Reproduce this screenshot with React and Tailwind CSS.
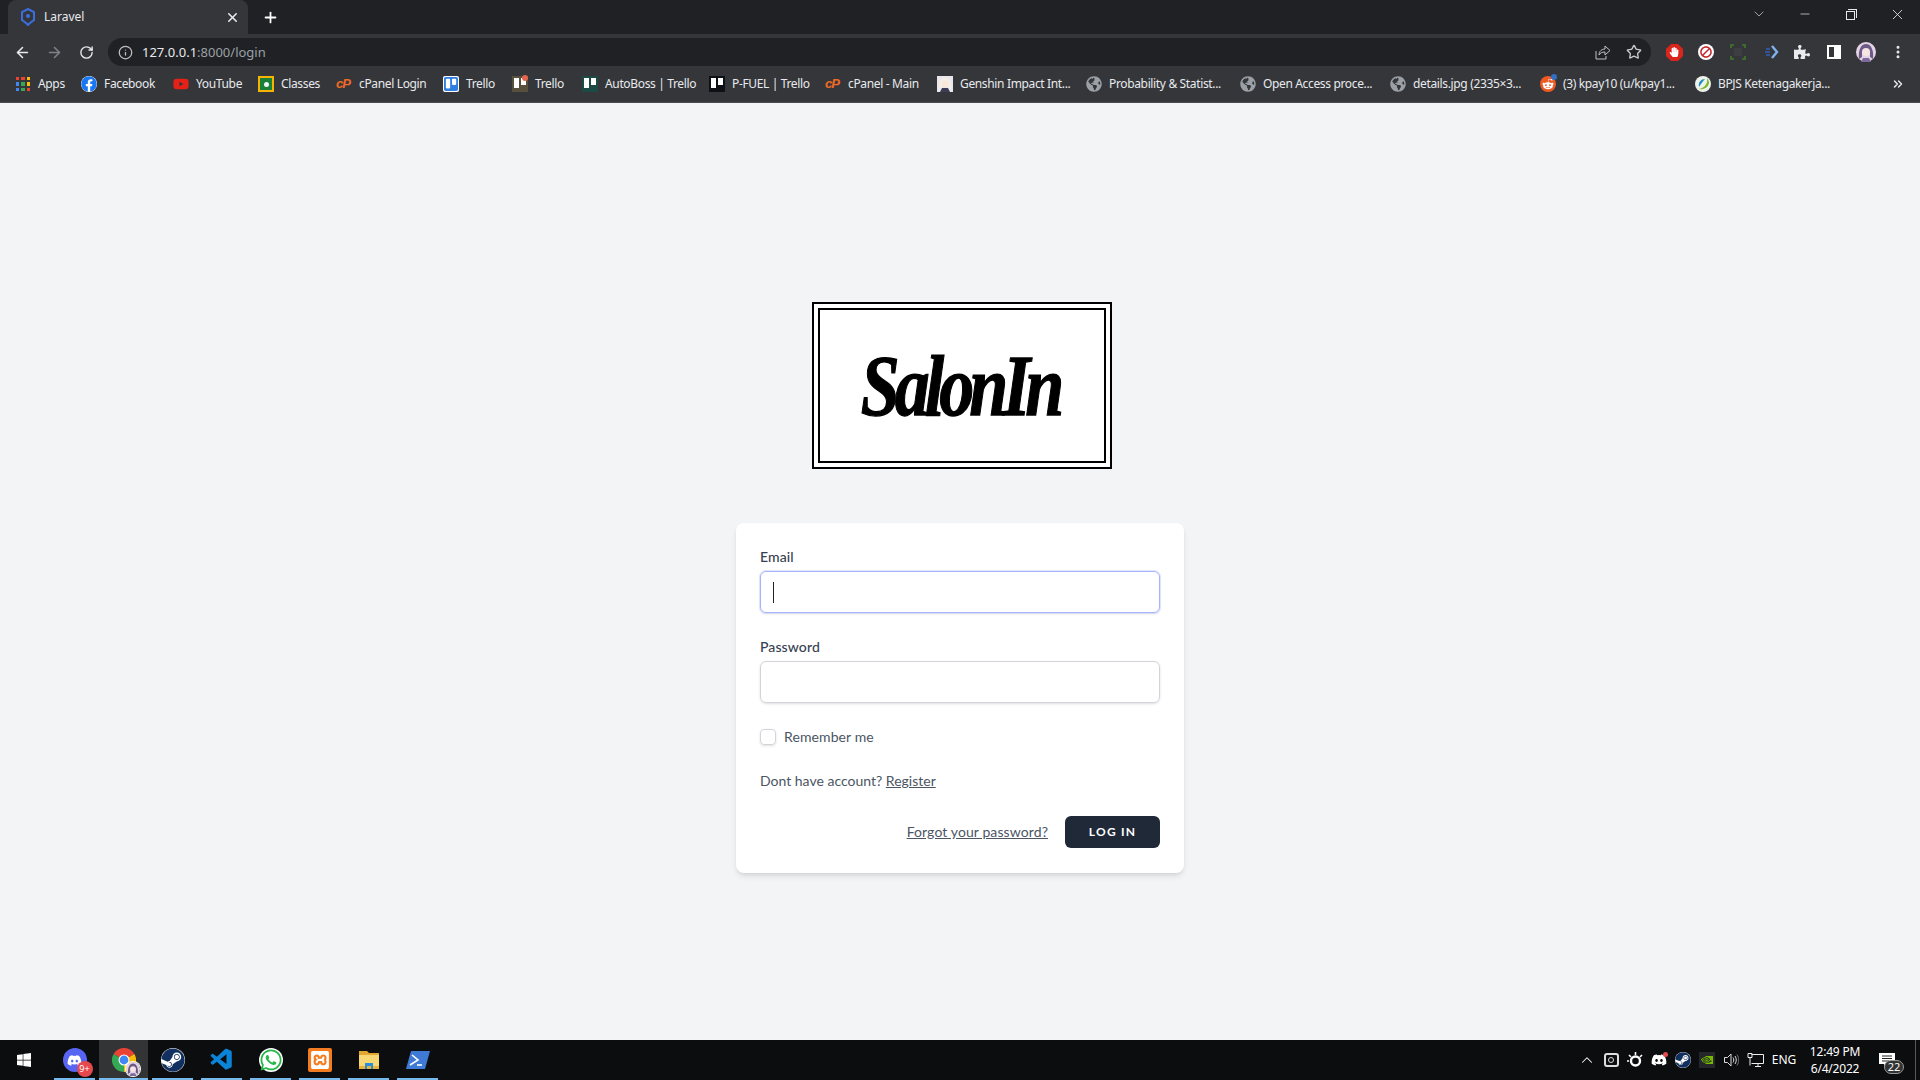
import React from 'react';
import { ArrowLeft, ArrowRight, RotateCw, Info, Star, Plus, X, Minus, ChevronDown, ChevronUp, EllipsisVertical, ChevronsRight } from 'lucide-react';
import { FaFacebook, FaYoutube, FaTrello, FaWindows, FaDiscord, FaSteam, FaWhatsapp, FaRedditAlien, FaGlobeAmericas, FaPuzzlePiece, FaHandPaper, FaBan } from 'react-icons/fa';
import { SiXampp, SiNvidia } from 'react-icons/si';
import { VscVscode } from 'react-icons/vsc';

const AppsIcon = () => (
  <div className="grid grid-cols-3 gap-[2px] w-[14px] h-[14px]">
    <span className="bg-[#ea4335]" /><span className="bg-[#ea4335]" /><span className="bg-[#fbbc05]" />
    <span className="bg-[#4285f4]" /><span className="bg-[#34a853]" /><span className="bg-[#fbbc05]" />
    <span className="bg-[#4285f4]" /><span className="bg-[#34a853]" /><span className="bg-[#ea4335]" />
  </div>
);

const Avatar = ({ size = 20 }) => (
  <svg width={size} height={size} viewBox="0 0 20 20">
    <circle cx="10" cy="10" r="10" fill="#e4d5e6" />
    <path d="M3 17C2 8 5 2 10 2s8 6 7 15l-3-2V9H6v6z" fill="#6d5a86" />
    <circle cx="10" cy="10" r="4" fill="#f6e5e2" />
    <path d="M5 20l2-4h6l2 4z" fill="#7b6a9b" />
  </svg>
);

const ClassesIcon = () => (
  <div className="w-4 h-4 bg-[#f4b400] p-[2px] flex items-center justify-center">
    <div className="w-full h-full bg-[#188038] flex items-center justify-center">
      <span className="w-[5px] h-[5px] rounded-full bg-[#f1f3f4]" />
    </div>
  </div>
);

const CpanelIcon = () => (
  <span className="w-4 text-[#f06a26] text-[13px] leading-4 font-bold italic tracking-[-1px] font-['Liberation_Sans',sans-serif]">cP</span>
);

const TrelloIcon = () => <FaTrello className="text-[#2f7fe0] bg-white rounded-[2px]" size={16} />;

const BoardThumb = ({ bg, dot }) => (
  <div className={`relative w-4 h-4 flex justify-center gap-[2px] pt-[2px] ${bg}`}>
    <span className="w-[5px] h-[10px] bg-white" />
    <span className="w-[5px] h-[7px] bg-white" />
    {dot && <span className="absolute -top-[1px] right-0 w-[6px] h-[6px] rounded-full bg-[#e5654f]" />}
  </div>
);

const GenshinIcon = () => (
  <svg width="16" height="16" viewBox="0 0 16 16">
    <rect width="16" height="16" fill="#e9e6ee" />
    <path d="M2 14C1 6 4 1 8 1s7 5 6 13l-3-2V6H5v6z" fill="#f4efe6" />
    <circle cx="8" cy="8" r="3.4" fill="#fbe6da" />
    <path d="M3 16l2-4h6l2 4z" fill="#3d3b58" />
  </svg>
);

const Globe = () => <FaGlobeAmericas className="text-[#9aa0a6]" size={16} />;

const RedditIcon = () => (
  <div className="relative w-4 h-4 rounded-full bg-[#ee5a22] flex items-center justify-center">
    <FaRedditAlien className="text-white" size={12} />
    <span className="absolute -top-[2px] -right-[1px] w-[6px] h-[6px] rounded-full bg-[#2f6fc4]" />
  </div>
);

const BpjsIcon = () => (
  <svg width="16" height="16" viewBox="0 0 16 16">
    <circle cx="8" cy="8" r="8" fill="#eef2ea" />
    <path d="M12 2c1 5-2 10-8 11 4 1 9-1 10-6 0-2-1-4-2-5z" fill="#7ab929" />
    <path d="M10 3C6 3 3 6 4 11c2-3 4-6 6-8z" fill="#1f8fc4" />
  </svg>
);

const bookmarks = [
  { icon: <AppsIcon />, label: 'Apps', width: 'w-[66px]' },
  { icon: <FaFacebook className="text-[#1877f2] bg-white rounded-full" size={16} />, label: 'Facebook', width: 'w-[92px]' },
  { icon: <FaYoutube className="text-[#e62117]" size={16} />, label: 'YouTube', width: 'w-[85px]' },
  { icon: <ClassesIcon />, label: 'Classes', width: 'w-[78px]' },
  { icon: <CpanelIcon />, label: 'cPanel Login', width: 'w-[107px]' },
  { icon: <TrelloIcon />, label: 'Trello', width: 'w-[69px]' },
  { icon: <BoardThumb bg="bg-[#57503c]" dot />, label: 'Trello', width: 'w-[70px]' },
  { icon: <BoardThumb bg="bg-[#1d4a44]" />, label: 'AutoBoss | Trello', width: 'w-[127px]' },
  { icon: <BoardThumb bg="bg-[#0d1014]" />, label: 'P-FUEL | Trello', width: 'w-[116px]' },
  { icon: <CpanelIcon />, label: 'cPanel - Main', width: 'w-[112px]' },
  { icon: <GenshinIcon />, label: 'Genshin Impact Int...', width: 'w-[149px]' },
  { icon: <Globe />, label: 'Probability & Statist...', width: 'w-[154px]' },
  { icon: <Globe />, label: 'Open Access proce...', width: 'w-[150px]' },
  { icon: <Globe />, label: 'details.jpg (2335×3...', width: 'w-[150px]' },
  { icon: <RedditIcon />, label: '(3) kpay10 (u/kpay1...', width: 'w-[155px]' },
  { icon: <BpjsIcon />, label: 'BPJS Ketenagakerja...', width: 'w-[140px]' },
];

const ChromeIcon = () => (
  <div className="relative w-6 h-6">
    <svg width="24" height="24" viewBox="0 0 24 24">
      <path d="M12 12 L1.6 6 A12 12 0 0 1 22.4 6 Z" fill="#ea4335" />
      <path d="M12 12 L22.4 6 A12 12 0 0 1 12 24 Z" fill="#fbbc05" />
      <path d="M12 12 L12 24 A12 12 0 0 1 1.6 6 Z" fill="#34a853" />
      <circle cx="12" cy="12" r="5.5" fill="#fff" />
      <circle cx="12" cy="12" r="4.4" fill="#4285f4" />
    </svg>
    <div className="absolute -right-[4px] -bottom-[4px] rounded-full ring-1 ring-white">
      <Avatar size={14} />
    </div>
  </div>
);

const FolderIcon = () => (
  <svg width="24" height="24" viewBox="0 0 24 24">
    <path d="M2 3h8l2 2h10v5H2z" fill="#e2a72e" />
    <path d="M2 7h20v14H2z" fill="#f8d775" />
    <path d="M2 18h20v3H2z" fill="#e8b23c" />
    <path d="M8 15h8v6h-2v-3h-4v3H8z" fill="#2b8fd8" />
  </svg>
);

const PowershellIcon = () => (
  <svg width="24" height="24" viewBox="0 0 24 24">
    <path d="M5 3h19l-5 18H0z" fill="#3f7bd6" />
    <path d="M6 7l6 5-8 5" fill="none" stroke="#fff" strokeWidth="1.6" />
    <path d="M11 17h5" stroke="#fff" strokeWidth="1.6" />
  </svg>
);

const XamppIcon = () => (
  <div className="w-6 h-6 rounded-[2px] bg-[#f47b20] flex items-center justify-center">
    <SiXampp className="text-white" size={18} />
  </div>
);

const SteamIcon = ({ size = 24 }) => (
  <div className="rounded-full bg-white">
    <FaSteam className="text-[#12305f]" size={size} />
  </div>
);

const taskbarApps = [
  {
    icon: (
      <div className="relative w-6 h-6 rounded-full bg-[#5865f2] flex items-center justify-center">
        <FaDiscord className="text-white" size={15} />
        <span className="absolute -right-[6px] -bottom-[5px] w-[16px] h-[16px] rounded-full bg-[#e5484d] text-white text-[9px] leading-[16px] text-center">9+</span>
      </div>
    ),
    key: 'discord',
  },
  { icon: <ChromeIcon />, key: 'chrome', active: true },
  { icon: <SteamIcon />, key: 'steam' },
  { icon: <VscVscode className="text-[#0a84d6]" size={26} />, key: 'code' },
  {
    icon: (
      <div className="w-6 h-6 rounded-full bg-white flex items-center justify-center">
        <FaWhatsapp className="text-[#25b848]" size={24} />
      </div>
    ),
    key: 'whatsapp',
  },
  { icon: <XamppIcon />, key: 'xampp' },
  { icon: <FolderIcon />, key: 'folder' },
  { icon: <PowershellIcon />, key: 'powershell' },
];

const BrowserChrome = () => (
  <div className="shrink-0">
    {/* tab strip */}
    <div className="h-[34px] bg-[#202124] flex items-end pl-2 text-white">
      <div className="w-[240px] h-[34px] mt-0 bg-[#35363a] rounded-t-lg flex items-center pl-[12px] pr-[8px]">
        <svg width="16" height="18" viewBox="0 0 16 18">
          <path d="M8 1l6 3v8l-4 3-2 2-2-2-4-3V4z" fill="none" stroke="#3b6fe0" strokeWidth="2" />
          <circle cx="8" cy="8" r="2" fill="#3b6fe0" />
        </svg>
        <span className="ml-2 flex-1 text-[12px] text-[#e8eaed]">Laravel</span>
        <X size={15} strokeWidth={2.5} className="text-[#e8eaed]" />
      </div>
      <div className="w-[44px] h-[34px] flex items-center justify-center">
        <Plus size={17} strokeWidth={2.5} />
      </div>
      <div className="flex-1" />
      <div className="h-[34px] flex items-start text-[#e8eaed]">
        <div className="w-[46px] h-7 flex items-center justify-center"><ChevronDown size={16} strokeWidth={1.2} className="text-[#bdc1c6]" /></div>
        <div className="w-[46px] h-7 flex items-center justify-center"><Minus size={14} strokeWidth={1.2} /></div>
        <div className="w-[46px] h-7 flex items-center justify-center pr-[2px]">
          <div className="relative w-[9px] h-[9px] border border-[#e8eaed] mt-[2px] before:absolute before:-top-[3px] before:-right-[3px] before:w-[9px] before:h-[9px] before:border-t before:border-r before:border-[#e8eaed]" />
        </div>
        <div className="w-[46px] h-7 flex items-center justify-center"><X size={17} strokeWidth={1.2} /></div>
      </div>
    </div>

    {/* toolbar */}
    <div className="h-[32px] bg-[#35363a] flex items-start pt-1 pl-[6px]">
      <div className="w-8 h-7 flex items-center justify-center text-[#e8eaed]"><ArrowLeft size={17} strokeWidth={2.2} /></div>
      <div className="w-8 h-7 flex items-center justify-center text-[#7e8185]"><ArrowRight size={17} strokeWidth={2.2} /></div>
      <div className="w-8 h-7 flex items-center justify-center text-[#e8eaed]"><RotateCw size={15} strokeWidth={2.2} /></div>
      <div className="ml-[6px] w-[1543px] h-7 rounded-full bg-[#202124] flex items-center pl-[10px] pr-[8px]">
        <Info size={15} className="text-[#bdc1c6]" />
        <span className="ml-[9px] text-[13px] leading-7 text-[#e8eaed]">127.0.0.1<span className="text-[#9aa0a6]">:8000/login</span></span>
        <div className="flex-1" />
        <svg width="16" height="16" viewBox="0 0 16 16" fill="none" stroke="#bdc1c6" strokeWidth="1">
          <path d="M2 7v8h10v-3" />
          <path d="M5 11c0-4 3-6 6-6V2l5 4.500-5 4.500V8c-3 0-5 1-6 3z" />
        </svg>
        <Star size={16} className="ml-4 mr-[1px] text-[#c8ccd0]" />
      </div>
      <div className="ml-[7px] flex items-center text-[#e8eaed]">
        <div className="relative w-8 h-7 flex items-center justify-center">
          <svg width="17" height="17" viewBox="0 0 17 17">
            <path d="M5 0h7l5 5v7l-5 5H5l-5-5V5z" fill="#d9261c" />
          </svg>
          <FaHandPaper className="absolute text-white" size={10} />
        </div>
        <div className="w-8 h-7 flex items-center justify-center">
          <div className="w-4 h-4 rounded-full bg-white flex items-center justify-center"><FaBan className="text-[#c4262e] -scale-x-100" size={12} /></div>
        </div>
        <div className="w-8 h-7 flex items-center justify-center">
          <svg width="16" height="16" viewBox="0 0 16 16" fill="none">
            <path d="M1 4V1h3M12 1h3v3M15 12v3h-3M4 15H1v-3" stroke="#3f7a2c" strokeWidth="1.6" />
            <rect x="4" y="4" width="8" height="8" fill="#3d3e42" />
          </svg>
        </div>
        <div className="w-8 h-7 flex items-center justify-center pl-[3px]">
          <svg width="16" height="16" viewBox="0 0 16 16" fill="none">
            <path d="M8 2l5 6-5 6" stroke="#7fb2f0" strokeWidth="2.4" />
            <path d="M2 5h4M1 8h5M2 11h4" stroke="#2f62b5" strokeWidth="1.4" />
          </svg>
        </div>
        <div className="w-8 h-7 flex items-center justify-center"><FaPuzzlePiece size={16} /></div>
        <div className="w-8 h-7 flex items-center justify-center">
          <div className="w-[14px] h-[14px] border-2 border-white flex justify-end"><div className="w-[5px] bg-white" /></div>
        </div>
        <div className="w-8 h-7 flex items-center justify-center"><Avatar /></div>
        <div className="w-8 h-7 flex items-center justify-center"><EllipsisVertical size={16} strokeWidth={2.5} /></div>
      </div>
    </div>

    {/* bookmarks */}
    <div className="h-[37px] bg-[#35363a] border-b border-[#4a4b4f] flex items-center pl-[15px] pr-3 text-[12px] text-[#e8eaed] font-['Noto_Sans',sans-serif]">
      {bookmarks.map((b, i) => (
        <div key={i} className={`flex items-center gap-[7px] shrink-0 whitespace-nowrap tracking-[-0.35px] ${b.width}`}>
          <div className="w-4 h-4 flex items-center justify-center shrink-0">{b.icon}</div>
          <span>{b.label}</span>
        </div>
      ))}
      <div className="flex-1" />
      <ChevronsRight size={14} strokeWidth={2.5} className="mr-[3px]" />
    </div>
  </div>
);

const Login = () => (
  <div className="flex-1 bg-[#f3f4f6] flex flex-col items-center pt-[199px] font-['Lato','Noto_Sans',sans-serif] tracking-[0.1px]">
    {/* logo */}
    <div className="w-[300px] h-[167px] ml-[4px] bg-white border-2 border-black p-1">
      <div className="w-full h-full border-[2px] border-black flex items-center justify-center">
        <span className="scale-y-[1.25] text-[70px] leading-none font-bold italic tracking-[-5px] text-black pr-1 font-['Liberation_Serif',serif] [-webkit-text-stroke:1px_black]">SalonIn</span>
      </div>
    </div>

    {/* card */}
    <div className="mt-[54px] w-[448px] h-[350px] bg-white rounded-lg shadow-md px-6 pt-[24px]">
      <label className="block text-[14px] leading-5 font-medium text-[#374151]">Email</label>
      <div className="relative mt-1">
        <input className="block w-full h-[42px] rounded-md border border-[#a5b4fc] ring-1 ring-[#c7d2fe]/50 shadow-sm outline-none" />
        <span className="absolute left-[13px] top-[11px] w-px h-[21px] bg-[#222]" />
      </div>

      <label className="block mt-[24px] text-[14px] leading-5 font-medium text-[#374151]">Password</label>
      <input className="mt-1 block w-full h-[42px] rounded-md border border-[#d1d5db] shadow-sm outline-none" />

      <label className="mt-[26px] flex items-center h-4">
        <input type="checkbox" className="appearance-none w-4 h-4 rounded border border-[#d1d5db] shadow-sm" />
        <span className="ml-2 -mt-[1px] text-[14px] text-[#4b5563]">Remember me</span>
      </label>

      <div className="mt-[26px] h-5 text-[14px] leading-5 text-[#4b5563] tracking-normal">
        Dont have account? <a className="underline">Register</a>
      </div>

      <div className="mt-[25px] flex items-center justify-end">
        <a className="-mt-[1px] text-[14px] underline text-[#4b5563]">Forgot your password?</a>
        <button className="ml-[17px] w-[95px] h-[32px] rounded-md bg-[#1f2937] text-white text-[12px] font-bold tracking-[0.1em] uppercase">Log in</button>
      </div>
    </div>
  </div>
);

const Taskbar = () => (
  <div className="h-10 shrink-0 bg-[#0c0d0f] flex items-center text-white font-['Noto_Sans',sans-serif]">
    <div className="w-[50px] flex items-center justify-center pr-[2px]"><FaWindows size={16} /></div>
    {taskbarApps.map((app) => (
      <div key={app.key} className={`relative w-[49px] h-10 flex items-center justify-center ${app.active ? 'bg-[#333436]' : ''}`}>
        {app.icon}
        <span className={`absolute bottom-0 h-[2px] bg-[#76b9ed] ${app.active ? 'inset-x-0' : 'inset-x-1'}`} />
      </div>
    ))}
    <div className="flex-1" />
    <div className="flex items-center">
      <div className="w-6 flex justify-center"><ChevronUp size={18} strokeWidth={1.4} /></div>
      <div className="w-6 flex justify-center">
        <div className="w-[15px] h-[14px] border-2 border-[#ddd] rounded-[3px] flex items-center justify-center">
          <span className="w-[6px] h-[6px] border border-[#ddd] rounded-full" />
        </div>
      </div>
      <div className="w-6 flex justify-center">
        <svg width="16" height="16" viewBox="0 0 16 16" fill="none" stroke="#fff">
          <circle cx="8.500" cy="9" r="4.500" strokeWidth="2.400" />
          <path d="M8.500 0v3M2 3l2 2M0 9h2M15 3l-2 2" strokeWidth="1.600" />
        </svg>
      </div>
      <div className="relative w-6 flex justify-center">
        <FaDiscord size={16} />
        <span className="absolute top-0 right-[3px] w-[5px] h-[5px] rounded-full bg-[#e5484d]" />
      </div>
      <div className="w-6 flex justify-center"><SteamIcon size={16} /></div>
      <div className="w-6 flex justify-center">
        <div className="w-4 h-4 bg-[#23262a] flex items-center justify-center"><SiNvidia className="text-[#76b900]" size={12} /></div>
      </div>
      <div className="w-6 flex justify-center">
        <svg width="16" height="16" viewBox="0 0 16 16" fill="none" stroke="#ddd">
          <path d="M1.500 5.500h3l3.500-3.500v12l-3.500-3.500h-3z" />
          <path d="M10 5.500c1 1.500 1 3.500 0 5M12 4c1.700 2.500 1.700 5.500 0 8" />
          <path d="M14 2.500c2.300 3.500 2.300 7.500 0 11" stroke="#777" />
        </svg>
      </div>
      <div className="w-6 flex justify-center">
        <svg width="17" height="16" viewBox="0 0 17 16" fill="none" stroke="#eee">
          <path d="M4.500 2.500h12v9h-12" />
          <path d="M1 1.500h4v4H1zM3 5.500v8M8 14.500h6M11 11.500v3" />
        </svg>
      </div>
      <span className="w-[34px] text-center text-[12px]">ENG</span>
      <div className="w-[68px] text-center text-[12px] leading-[17px] tracking-[-0.2px]">
        <div>12:49 PM</div>
        <div>6/4/2022</div>
      </div>
      <div className="relative w-[36px] h-[24px] flex items-center justify-center">
        <svg width="16" height="15" viewBox="0 0 16 15">
          <path d="M0 0h16v11H8l-3 4v-4H0z" fill="#fff" />
          <path d="M3 3h10M3 5.500h10M3 8h7" stroke="#222" />
        </svg>
        <span className="absolute right-[1px] -bottom-[2px] w-[20px] h-[14px] rounded-full bg-[#333] border border-[#999] text-[11px] leading-[12px] text-center">22</span>
      </div>
      <div className="ml-[10px] w-px h-10 bg-[#55585c] mr-[4px]" />
    </div>
  </div>
);

export default function App() {
  return (
    <div className="w-[1920px] h-[1080px] overflow-hidden flex flex-col font-['Noto_Sans',sans-serif]">
      <BrowserChrome />
      <Login />
      <Taskbar />
    </div>
  );
}
